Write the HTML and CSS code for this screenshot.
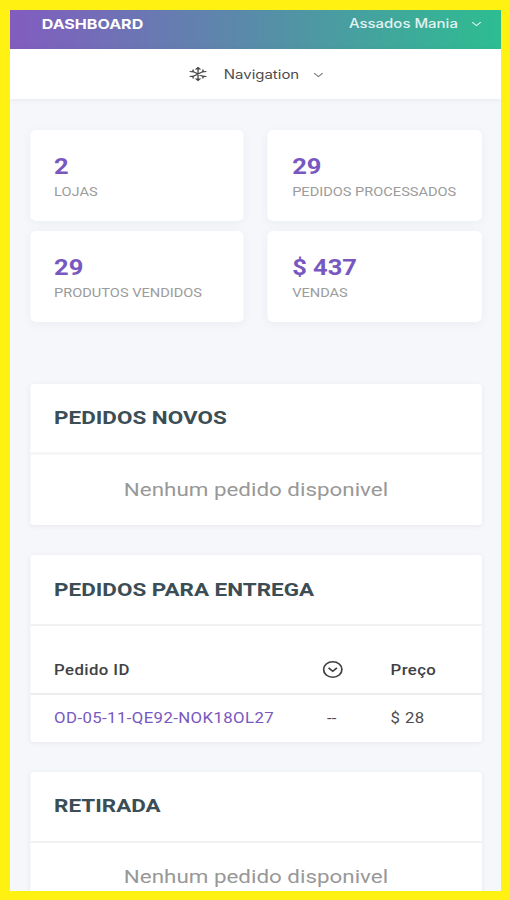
FILE: index.html
```html
<!DOCTYPE html>
<html lang="pt-BR">
<head>
<meta charset="utf-8">
<title>Dashboard</title>
<link rel="stylesheet" href="styles.css">
</head>
<body>
<div class="frame">
<div class="screen">
  <header class="topbar">
    <h1 class="topbar-title">DASHBOARD</h1>
    <div class="account"><span class="account-name">Assados Mania</span>
      <svg class="chevron" viewBox="0 0 10 6"><path d="M1 1l4 3.8L9 1"/></svg>
    </div>
  </header>
  <nav class="nav">
    <svg class="nav-icon" viewBox="0 0 16 16"><path d="M8 2v12M3 5l10 6M13 5l-10 6M1 5.500l2.800.300.200-2.300M15 5.500l-2.800.300-.200-2.300M1 10.500l2.800-.300.200 2.300M15 10.500l-2.800-.300-.200 2.300"/><path class="tips" d="M5.200 3.500L8 .8l2.800 2.700zM5.200 12.500L8 15.200l2.800-2.700z"/></svg>
    <span class="nav-label">Navigation</span>
    <svg class="chevron" viewBox="0 0 10 6"><path d="M1 1l4 3.800L9 1"/></svg>
  </nav>
  <main class="content">
    <section class="stats">
      <div class="stat"><strong>2</strong><span>LOJAS</span></div>
      <div class="stat"><strong>29</strong><span>PEDIDOS PROCESSADOS</span></div>
      <div class="stat"><strong>29</strong><span>PRODUTOS VENDIDOS</span></div>
      <div class="stat"><strong>$ 437</strong><span>VENDAS</span></div>
    </section>
    <section class="panel panel-new">
      <h2>PEDIDOS NOVOS</h2>
      <p class="empty">Nenhum pedido disponivel</p>
    </section>
    <section class="panel panel-delivery">
      <h2>PEDIDOS PARA ENTREGA</h2>
      <div class="row row-head">
        <span>Pedido ID</span>
        <svg class="round-icon" viewBox="0 0 16 16"><circle cx="8" cy="8" r="7.200"/><path d="M4.700 6.500L8 9.600l3.300-3.100"/></svg>
        <span>Preço</span>
      </div>
      <div class="row">
        <a class="order">OD-05-11-QE92-NOK18OL27</a>
        <span class="dash">--</span>
        <span>$ 28</span>
      </div>
    </section>
    <section class="panel">
      <h2>RETIRADA</h2>
      <p class="empty">Nenhum pedido disponivel</p>
    </section>
  </main>
</div>
</div>
</body>
</html>
```
FILE: styles.css
```css
* { box-sizing: border-box; }
body { margin: 0; }
.frame {
  width: 510px;
  height: 900px;
  padding: 10px 9px 9px 10px;
  background: #fff212;
  overflow: hidden;
}
/* anamorphic screen: laid out 410px wide, stretched to the frame */
.screen {
  width: 410px;
  height: 881px;
  overflow: hidden;
  transform: scaleX(1.1976);
  transform-origin: 0 0;
  background: #f5f7fb;
  font-family: Roboto, "Liberation Sans", sans-serif;
  color: #4c4c4e;
}
.topbar {
  height: 39px;
  padding: 0 16px 11px 26.500px;
  display: flex;
  align-items: center;
  justify-content: space-between;
  background: linear-gradient(90deg, #825cc0, #2dbd91);
  color: #fff;
}
.topbar-title { margin: 0; font: 700 13.400px/28px Inter, sans-serif; }
.account { display: flex; align-items: center; gap: 11px; color: #e2f2f2; }
.account-name { font: 500 12.500px/28px Inter, sans-serif; }
.chevron { width: 9px; height: 6px; fill: none; stroke: currentColor; stroke-width: 1; }
.nav {
  height: 50px;
  padding: 1px 0 0 148.500px;
  display: flex;
  align-items: center;
  background: #fff;
  box-shadow: 0 1px 4px rgba(60, 65, 80, .08);
}
.nav-icon { width: 16px; height: 16px; margin: -1px 14px 0 0; fill: none; stroke: #47474a; stroke-width: 1.100; }
.nav-icon .tips { fill: #47474a; stroke: none; }
.nav-label { font: 400 12.500px/20px Inter, sans-serif; margin-right: 11px; }
.nav .chevron { color: #77777a; }
.content { padding: 31px 15.800px 0 16.600px; }
.stats { display: grid; grid-template-columns: 1fr 1fr; gap: 10px 20px; }
.stat {
  height: 91px;
  padding: 23px 0 0 20.200px;
  border-radius: 5px;
  background: #fff;
  box-shadow: 0 2px 9px rgba(60, 65, 80, .055);
  white-space: nowrap;
}
.stat strong { display: block; font-size: 21.300px; line-height: 27px; font-weight: 700; color: #7858c0; }
.stat span { display: block; font-size: 12.200px; line-height: 24px; color: #9b9b9b; }
.panel {
  margin-bottom: 30px;
  border-radius: 3px;
  background: #fff;
  box-shadow: 0 1px 5px rgba(60, 65, 80, .08);
}
.panel-new { margin-top: 62px; }
.panel h2 {
  margin: 0;
  height: 71px;
  padding-left: 20.200px;
  border-bottom: 2px solid #f0f1f3;
  font-size: 18.750px;
  line-height: 69px;
  font-weight: 700;
  color: #3b4d55;
}
.panel-new h2 { border-bottom-width: 3px; border-color: #f6f6f8; }
.panel-delivery h2 { line-height: 70px; }
.empty { margin: 0; height: 70px; font-size: 18.700px; line-height: 69px; text-align: center; color: #989898; }
.panel-new .empty { line-height: 70px; }
.row { display: grid; grid-template-columns: 224px 57px 1fr; align-items: center; height: 47px; padding: 0 0 2px 20.200px; font-size: 14px; letter-spacing: .330px; }
.row-head { height: 69px; padding-top: 20px; padding-bottom: 0; border-bottom: 2px solid #ececee; font-weight: 500; color: #414144; }
.round-icon { width: 17px; height: 17px; fill: none; stroke: #414144; stroke-width: 1.400; }
.order { color: #7858c0; }
.dash { padding-left: 4px; letter-spacing: 0; }
```
